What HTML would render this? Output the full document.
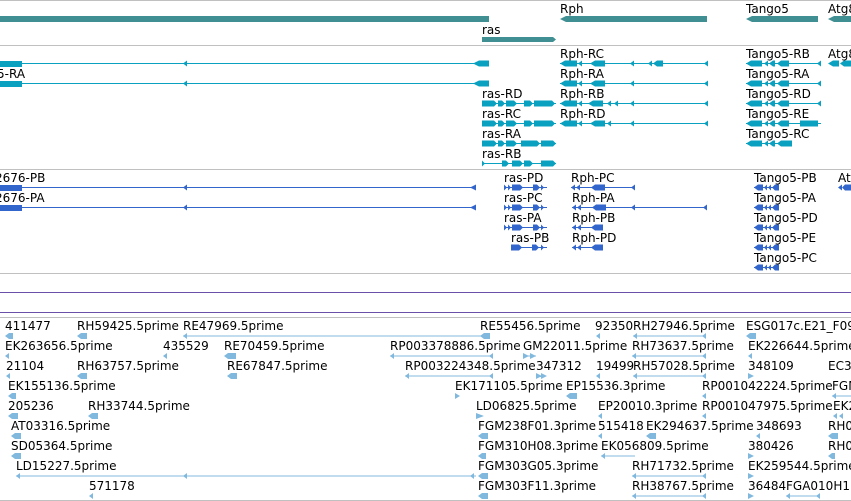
<!DOCTYPE html>
<html><head><meta charset="utf-8"><style>
html,body{margin:0;padding:0;background:#fff;width:851px;height:501px;overflow:hidden}
svg{display:block}
text{font-family:"DejaVu Sans","Liberation Sans",sans-serif;font-size:12px;fill:#000}
</style></head><body>
<svg width="851" height="501" viewBox="0 0 851 501" xmlns="http://www.w3.org/2000/svg">
<g fill="#c0c0c0">
<rect x="0" y="0" width="851" height="1"/><rect x="0" y="45" width="851" height="1"/>
<rect x="0" y="169" width="851" height="1"/><rect x="0" y="273" width="851" height="1"/>
<rect x="0" y="317" width="851" height="1"/><rect x="0" y="500" width="851" height="1"/>
</g>
<rect x="0" y="292" width="851" height="1" fill="#6a50a8"/>
<rect x="0" y="312" width="851" height="1" fill="#6a50a8"/>

<!-- genes -->
<g fill="#3f8f93">
<rect x="0" y="16" width="489" height="6"/>
<path d="M560 19 L566 16 H707 V22 H566 Z"/>
<path d="M746 19 L752 16 H818 V22 H752 Z"/>
<path d="M828 19 L834 16 H851 V22 H834 Z"/>
<path d="M482 37 H553 L556 39.5 L553 42 H482 Z"/>
</g>
<text x="560" y="13">Rph</text><text x="746" y="13">Tango5</text><text x="828" y="13">Atg8</text>
<text x="482" y="34">ras</text>

<!-- transcripts -->
<g fill="#0aa0c0" stroke="none">
<rect x="0" y="61" width="22" height="6"/><rect x="0" y="63" width="489" height="1"/>
<path d="M183 63.5 l4 -3 v6z M473 63.5 l6 -3 h10 v6 h-10z"/>
<rect x="0" y="81" width="22" height="6"/><rect x="0" y="83" width="489" height="1"/>
<path d="M183 83.5 l4 -3 v6z M473 83.5 l6 -3 h10 v6 h-10z"/>
<rect x="560" y="63" width="147" height="1"/>
<path d="M560 63.5 l5 -3 h12 v6 h-12z M578 63.5 l4 -3 v6z M590 63.5 l5 -3 h10 v6 h-10z M630 63.5 l4 -3 v6z M648 63.5 l4 -3 v6z M653 63.5 l4 -3 h6 v6 h-6z M704 63.5 l4 -3 v6z"/>
<rect x="560" y="83" width="147" height="1"/>
<path d="M560 83.5 l5 -3 h12 v6 h-12z M578 83.5 l4 -3 v6z M590 83.5 l5 -3 h10 v6 h-10z M630 83.5 l4 -3 v6z M704 83.5 l4 -3 v6z"/>
<rect x="560" y="103" width="147" height="1"/>
<path d="M560 103.5 l5 -3 h12 v6 h-12z M578 103.5 l4 -3 v6z M588 103.5 l5 -3 h10 v6 h-10z M607 103.5 l4 -3 v6z M614 103.5 l4 -3 v6z M630 103.5 l4 -3 v6z M704 103.5 l4 -3 v6z"/>
<rect x="560" y="123" width="147" height="1"/>
<path d="M560 123.5 l5 -3 h12 v6 h-12z M578 123.5 l4 -3 v6z M590 123.5 l5 -3 h10 v6 h-10z M607 123.5 l4 -3 v6z M630 123.5 l4 -3 v6z M704 123.5 l4 -3 v6z"/>
<rect x="482" y="103" width="74" height="1"/>
<path d="M482 100.5 h12 l3 3 l-3 3 h-12z M498 100.5 h4 l3 3 l-3 3 h-4z M506 100.5 h8 l3 3 l-3 3 h-8z M524 100.5 h6 l3 3 l-3 3 h-6z M534 100.5 h18 l3 3 l-3 3 h-18z"/>
<rect x="482" y="123" width="74" height="1"/>
<path d="M482 120.5 h12 l3 3 l-3 3 h-12z M498 120.5 h4 l3 3 l-3 3 h-4z M506 120.5 h8 l3 3 l-3 3 h-8z M524 120.5 h6 l3 3 l-3 3 h-6z M534 120.5 h18 l3 3 l-3 3 h-18z"/>
<rect x="482" y="143" width="74" height="1"/>
<path d="M482 140.5 h12 l3 3 l-3 3 h-12z M498 140.5 h4 l3 3 l-3 3 h-4z M506 140.5 h8 l3 3 l-3 3 h-8z M521 140.5 h16 l3 3 l-3 3 h-16z M541 140.5 h12 l3 3 l-3 3 h-12z"/>
<rect x="482" y="163" width="74" height="1"/>
<path d="M482 160.5 l3 3 l-3 3z M502 160.5 h4 l3 3 l-3 3 h-4z M512 160.5 h8 l3 3 l-3 3 h-8z M524 160.5 h6 l3 3 l-3 3 h-6z M541 160.5 h12 l3 3 l-3 3 h-12z"/>
<rect x="746" y="63" width="75" height="1"/>
<path d="M746 63.5 l5 -3 h11 v6 h-11z M764 63.5 l4 -3 v6z M769 63.5 l4 -3 h2 v6 h-2z M777 63.5 l4 -3 h8 v6 h-8z M817 63.5 l4 -3 v6z"/>
<rect x="746" y="83" width="75" height="1"/>
<path d="M746 83.5 l5 -3 h11 v6 h-11z M764 83.5 l4 -3 v6z M769 83.5 l4 -3 h2 v6 h-2z M777 83.5 l4 -3 h8 v6 h-8z M817 83.5 l4 -3 v6z"/>
<rect x="746" y="103" width="75" height="1"/>
<path d="M746 103.5 l5 -3 h11 v6 h-11z M764 103.5 l4 -3 v6z M769 103.5 l4 -3 h2 v6 h-2z M777 103.5 l4 -3 h8 v6 h-8z M817 103.5 l4 -3 v6z"/>
<rect x="746" y="123" width="75" height="1"/>
<path d="M746 123.5 l5 -3 h11 v6 h-11z M764 123.5 l4 -3 v6z M769 123.5 l4 -3 h2 v6 h-2z M777 123.5 l4 -3 h8 v6 h-8z M800 120.5 h18 v6 h-18z"/>
<rect x="746" y="143" width="40" height="1"/>
<path d="M746 143.5 l5 -3 h11 v6 h-11z M764 143.5 l4 -3 v6z M769 143.5 l4 -3 h2 v6 h-2z M777 143.5 l4 -3 h11 v6 h-11z"/>
<path d="M828 63.5 l5 -3 h6 v6 h-6z M840 63.5 l4 -3 h7 v6 h-7z"/>
</g>
<text x="-3" y="78">5-RA</text>
<text x="560" y="58">Rph-RC</text><text x="560" y="78">Rph-RA</text><text x="560" y="98">Rph-RB</text><text x="560" y="118">Rph-RD</text>
<text x="482" y="98">ras-RD</text><text x="482" y="118">ras-RC</text><text x="482" y="138">ras-RA</text><text x="482" y="158">ras-RB</text>
<text x="746" y="58">Tango5-RB</text><text x="746" y="78">Tango5-RA</text><text x="746" y="98">Tango5-RD</text><text x="746" y="118">Tango5-RE</text><text x="746" y="138">Tango5-RC</text>
<text x="828" y="58">Atg8</text>

<!-- proteins -->
<g fill="#3366cc">
<rect x="0" y="185" width="22" height="6"/><rect x="0" y="187" width="476" height="1"/>
<path d="M183 187.5 l4 -3 v6z M470 187.5 l6 -3 v6z"/>
<rect x="0" y="205" width="22" height="6"/><rect x="0" y="207" width="476" height="1"/>
<path d="M183 207.5 l4 -3 v6z M470 207.5 l6 -3 v6z"/>
<rect x="504" y="187" width="43" height="1"/><rect x="504" y="207" width="43" height="1"/><rect x="504" y="227" width="43" height="1"/><rect x="511" y="247" width="36" height="1"/>
<path d="M504 184.5 l3 3 l-3 3z M508 184.5 l3 3 l-3 3z M512 184.5 h8 l3 3 l-3 3 h-8z M533 184.5 h4 l3 3 l-3 3 h-4z M541 184.5 l3 3 l-3 3z"/>
<path d="M504 204.5 l3 3 l-3 3z M508 204.5 l3 3 l-3 3z M512 204.5 h8 l3 3 l-3 3 h-8z M533 204.5 h4 l3 3 l-3 3 h-4z M541 204.5 l3 3 l-3 3z"/>
<path d="M504 224.5 l3 3 l-3 3z M508 224.5 l3 3 l-3 3z M512 224.5 h8 l3 3 l-3 3 h-8z M533 224.5 h4 l3 3 l-3 3 h-4z M541 224.5 l3 3 l-3 3z"/>
<path d="M511 244.5 h8 l3 3 l-3 3 h-8z M532 244.5 h4 l3 3 l-3 3 h-4z M541 244.5 l3 3 l-3 3z"/>
<rect x="571" y="187" width="64" height="1"/><rect x="572" y="207" width="135" height="1"/><rect x="572" y="227" width="30" height="1"/><rect x="572" y="247" width="30" height="1"/>
<path d="M571 187.5 l4 -3 v6z M576 187.5 l4 -3 v6z M591 187.5 l4 -3 h10 v6 h-10z M631 187.5 l4 -3 v6z"/>
<path d="M572 207.5 l4 -3 v6z M577 207.5 l4 -3 v6z M592 207.5 l4 -3 h10 v6 h-10z M631 207.5 l4 -3 v6z M703 207.5 l4 -3 v6z"/>
<path d="M572 227.5 l4 -3 v6z M577 227.5 l4 -3 v6z M591 227.5 l4 -3 h8 v6 h-8z"/>
<path d="M572 247.5 l4 -3 v6z M577 247.5 l4 -3 v6z M591 247.5 l4 -3 h8 v6 h-8z"/>
<path d="M754 187.5 l4 -3 h5 v6 h-5z M764 187.5 l3 -3 v6z M768 187.5 l3 -3 v6z M772 187.5 l3 -3 h4 v6 h-4z"/><rect x="754" y="187" width="24" height="1"/>
<path d="M754 207.5 l4 -3 h5 v6 h-5z M764 207.5 l3 -3 v6z M768 207.5 l3 -3 v6z M772 207.5 l3 -3 h4 v6 h-4z"/><rect x="754" y="207" width="24" height="1"/>
<path d="M754 227.5 l4 -3 h5 v6 h-5z M764 227.5 l3 -3 v6z M768 227.5 l3 -3 v6z M772 227.5 l3 -3 h4 v6 h-4z"/><rect x="754" y="227" width="24" height="1"/>
<path d="M754 247.5 l4 -3 h5 v6 h-5z M764 247.5 l3 -3 v6z M768 247.5 l3 -3 v6z M772 247.5 l3 -3 h4 v6 h-4z"/><rect x="754" y="247" width="24" height="1"/>
<path d="M754 267.5 l4 -3 h5 v6 h-5z M764 267.5 l3 -3 v6z M768 267.5 l3 -3 v6z M772 267.5 l3 -3 h4 v6 h-4z"/><rect x="754" y="267" width="24" height="1"/>
<path d="M838 187.5 l4 -3 v6z M842 187.5 l3 -3 h6 v6 h-6z"/>
</g>
<text x="-5" y="182">2676-PB</text><text x="-5" y="202">2676-PA</text>
<text x="504" y="182">ras-PD</text><text x="504" y="202">ras-PC</text><text x="504" y="222">ras-PA</text><text x="511" y="242">ras-PB</text>
<text x="571" y="182">Rph-PC</text><text x="572" y="202">Rph-PA</text><text x="572" y="222">Rph-PB</text><text x="572" y="242">Rph-PD</text>
<text x="754" y="182">Tango5-PB</text><text x="754" y="202">Tango5-PA</text><text x="754" y="222">Tango5-PD</text><text x="754" y="242">Tango5-PE</text><text x="754" y="262">Tango5-PC</text>
<text x="838" y="182">Atg8</text>

<!-- ESTs -->
<g fill="#80b8de">
<path d="M5 336 l4 -3 h4 v6 h-4z M77 336 l4 -3 h6 v6 h-6z M183 336 l4 -3 v6z M480 336 l4 -3 h6 v6 h-6z M596 336 l4 -3 v6z M633 336 l4 -3 v6z M702 336 l4 -3 v6z M746 336 l4 -3 h6 v6 h-6z"/>
<rect x="183" y="335.5" width="300" height="1"/><rect x="633" y="335.5" width="73" height="1"/>
<path d="M5 356 l4 -3 v6z M163 356 l4 -3 v6z M224 356 l4 -3 h8 v6 h-8z M390 356 l4 -3 v6z M489 356 l4 -3 v6z M523 353 l6 3 l-6 3z M530 353 l6 3 l-6 3z M632 356 l4 -3 v6z M702 356 l4 -3 v6z M748 356 l4 -3 v6z"/>
<rect x="390" y="355.5" width="103" height="1"/><rect x="632" y="355.5" width="74" height="1"/><rect x="523" y="355.5" width="13" height="1"/>
<path d="M6 376 l4 -3 v6z M77 376 l4 -3 h6 v6 h-6z M227 376 l4 -3 h6 v6 h-6z M405 376 l4 -3 v6z M489 376 l4 -3 v6z M536 373 l6 3 l-6 3z M541 373 l6 3 l-6 3z M596 376 l4 -3 v6z M633 376 l4 -3 v6z M702 376 l4 -3 v6z M748 373 l6 3 l-6 3z"/>
<rect x="405" y="375.5" width="88" height="1"/><rect x="633" y="375.5" width="73" height="1"/>
<path d="M8 396 l4 -3 h4 v6 h-4z M455 393 l5 3 l-5 3z M566 396 l4 -3 h7 v6 h-7z M702 396 l4 -3 v6z M832 396 l4 -3 v6z"/>
<rect x="832" y="395.5" width="19" height="1"/>
<path d="M8 416 l4 -3 h6 v6 h-6z M88 416 l4 -3 h6 v6 h-6z M476 413 l8 3 l-8 3z M598 416 l4 -3 v6z M702 416 l4 -3 v6z M833 416 l4 -3 v6z M839 416 l4 -3 v6z"/>
<path d="M11 436 l4 -3 h6 v6 h-6z M478 436 l4 -3 h6 v6 h-6z M598 436 l4 -3 v6z M646 436 l4 -3 h6 v6 h-6z M756 436 l4 -3 v6z M828 436 l4 -3 h6 v6 h-6z"/>
<path d="M11 456 l4 -3 h6 v6 h-6z M478 456 l4 -3 h4 v6 h-4z M601 456 l4 -3 v6z M748 453 l6 3 l-6 3z M828 456 l4 -3 h3 v6 h-3z"/>
<rect x="601" y="455.5" width="34" height="1"/>
<path d="M16 476 l4 -3 v6z M183 476 l4 -3 v6z M470 476 l4 -3 v6z M478 476 l4 -3 h6 v6 h-6z M632 476 l4 -3 v6z M702 476 l4 -3 v6z M748 473 l6 3 l-6 3z"/>
<rect x="16" y="475.5" width="460" height="1"/><rect x="632" y="475.5" width="74" height="1"/>
<path d="M89 496 l4 -3 v6z M478 496 l4 -3 h6 v6 h-6z M632 496 l4 -3 v6z M702 496 l4 -3 v6z M748 493 l6 3 l-6 3z M786 496 l4 -3 v6z M816 496 l4 -3 v6z"/>
<rect x="632" y="495.5" width="74" height="1"/><rect x="786" y="495.5" width="34" height="1"/>
</g>
<g>
<text x="5" y="330">411477</text><text x="77" y="330">RH59425.5prime</text><text x="183" y="330">RE47969.5prime</text><text x="480" y="330">RE55456.5prime</text><text x="595" y="330">92350</text><text x="633" y="330">RH27946.5prime</text><text x="746" y="330">ESG017c.E21_F09</text>
<text x="5" y="350">EK263656.5prime</text><text x="163" y="350">435529</text><text x="224" y="350">RE70459.5prime</text><text x="390" y="350">RP003378886.5prime</text><text x="523" y="350">GM22011.5prime</text><text x="632" y="350">RH73637.5prime</text><text x="748" y="350">EK226644.5prime</text>
<text x="6" y="370">21104</text><text x="77" y="370">RH63757.5prime</text><text x="227" y="370">RE67847.5prime</text><text x="405" y="370">RP003224348.5prime</text><text x="536" y="370">347312</text><text x="596" y="370">19499</text><text x="633" y="370">RH57028.5prime</text><text x="748" y="370">348109</text><text x="828" y="370">EC3</text>
<text x="8" y="390">EK155136.5prime</text><text x="455" y="390">EK171105.5prime</text><text x="566" y="390">EP15536.3prime</text><text x="702" y="390">RP001042224.5prime</text><text x="832" y="390">FGM</text>
<text x="8" y="410">205236</text><text x="88" y="410">RH33744.5prime</text><text x="476" y="410">LD06825.5prime</text><text x="598" y="410">EP20010.3prime</text><text x="702" y="410">RP001047975.5prime</text><text x="833" y="410">EK2</text>
<text x="11" y="430">AT03316.5prime</text><text x="478" y="430">FGM238F01.3prime</text><text x="598" y="430">515418</text><text x="646" y="430">EK294637.5prime</text><text x="756" y="430">348693</text><text x="828" y="430">RH0</text>
<text x="11" y="450">SD05364.5prime</text><text x="478" y="450">FGM310H08.3prime</text><text x="601" y="450">EK056809.5prime</text><text x="748" y="450">380426</text><text x="828" y="450">RH0</text>
<text x="16" y="470">LD15227.5prime</text><text x="478" y="470">FGM303G05.3prime</text><text x="632" y="470">RH71732.5prime</text><text x="748" y="470">EK259544.5prime</text>
<text x="89" y="490">571178</text><text x="478" y="490">FGM303F11.3prime</text><text x="632" y="490">RH38767.5prime</text><text x="748" y="490">36484</text><text x="786" y="490">FGA010H1</text>
</g>
</svg>
</body></html>
